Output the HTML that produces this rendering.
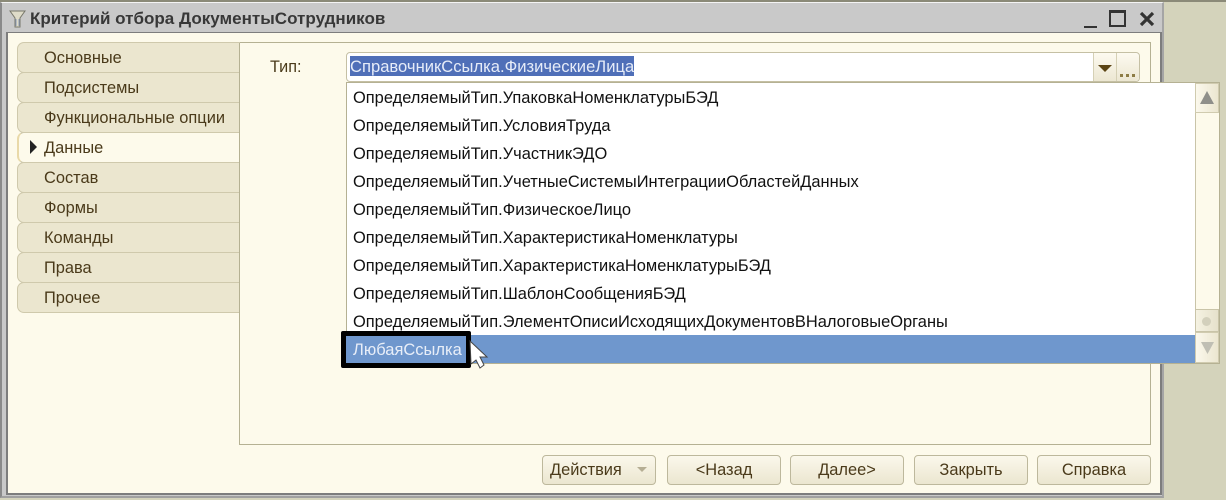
<!DOCTYPE html>
<html><head><meta charset="utf-8">
<style>
html,body{margin:0;padding:0}
body{width:1226px;height:500px;position:relative;overflow:hidden;background:#d4d3bb;font-family:"Liberation Sans",sans-serif;font-size:16px}
div{position:absolute;box-sizing:border-box}
.tab{left:17px;width:223px;height:31px;background:#ebe6cf;border:1px solid #cfc9ac;border-right:none;border-radius:7px 0 0 7px;color:#4a3a1a;line-height:30px;padding-left:26px;font-size:16.4px;white-space:nowrap}
.it{left:6px;height:28px;line-height:29px;color:#111;white-space:nowrap;font-size:16.44px}
.btn{top:455px;height:30px;background:linear-gradient(#fbf8ec,#ebe6d0);border:1px solid #bdb89c;border-radius:4px;color:#4a3a1a;text-align:center;line-height:29px;font-size:16.4px;white-space:nowrap}
</style></head><body>
<div style="left:0;top:0;width:1226px;height:2px;background:#8b8a78"></div>
<div style="left:0;top:2px;width:1164px;height:496px;background:#c9c9c9;border-left:2px solid #8a8a8a;border-top:1px solid #f4f4f4;border-right:2px solid #a5a5a5;border-bottom:2px solid #a0a0a0"></div>
<div style="left:6px;top:32px;width:1156px;height:463px;background:#fdfaeb;border:1px solid #7d7d7d;border-width:1px 2px 2px 2px"></div>
<svg style="position:absolute;left:9px;top:10px" width="17" height="18" viewBox="0 0 17 18"><path d="M1 1H16L11 8V17H6V8Z" fill="#dedbc8" stroke="#77776a"/><path d="M7 9V16M10 9V16" stroke="#8a9ab8"/></svg>
<div style="left:30px;top:9px;font-weight:bold;font-size:17.05px;line-height:20px;color:#383838;white-space:nowrap">Критерий отбора ДокументыСотрудников</div>
<div style="left:1084px;top:26px;width:13px;height:2px;background:#333"></div>
<div style="left:1109px;top:10px;width:17px;height:17px;border:2px solid #333;border-top-width:3px"></div>
<svg style="position:absolute;left:1139px;top:11px" width="16" height="16" viewBox="0 0 16 16"><path d="M2 2L14 14M14 2L2 14" stroke="#333" stroke-width="3.2"/></svg>

<div style="left:239px;top:42px;width:912px;height:403px;background:#fdfaeb;border:1px solid #b5b193"></div>
<div class="tab" style="top:42px">Основные</div>
<div class="tab" style="top:72px">Подсистемы</div>
<div class="tab" style="top:102px">Функциональные опции</div>
<div class="tab" style="top:132px;background:#fdfaeb;border-right:none;border-left:2px solid #e9d9a8;width:223px;padding-left:25px">Данные</div>
<div class="tab" style="top:162px">Состав</div>
<div class="tab" style="top:192px">Формы</div>
<div class="tab" style="top:222px">Команды</div>
<div class="tab" style="top:252px">Права</div>
<div class="tab" style="top:282px">Прочее</div>
<svg style="position:absolute;left:29px;top:140px" width="9" height="14"><path d="M1 0L8 7L1 14Z" fill="#222"/></svg>
<div style="left:239px;top:43px;width:1px;height:402px;background:#b5b193"></div>

<div style="left:270px;top:58px;font-size:16.2px;line-height:18px;color:#4a3a1a">Тип:</div>
<div style="left:346px;top:52px;width:794px;height:30px;background:#fff;border:1px solid #c5c0a4;border-radius:4px"></div>
<div style="left:350px;top:56px;width:284px;height:20px;background:#4f6fb8;color:#e6ecf8;font-size:16.6px;line-height:21px;white-space:nowrap;overflow:hidden">СправочникСсылка.ФизическиеЛица</div>
<div style="left:1093px;top:53px;width:46px;height:28px;background:linear-gradient(#fdfaf0,#ece7d2);border-left:1px solid #d5d0b5;border-radius:0 4px 4px 0"></div>
<div style="left:1116px;top:53px;width:1px;height:28px;background:#d5d0b5"></div>
<svg style="position:absolute;left:1098px;top:65px" width="14" height="7"><path d="M0 0H14L7 7Z" fill="#5a4413"/></svg>
<div style="left:1120px;top:74px;width:15px;height:3px;background:repeating-linear-gradient(90deg,#8d7c45 0,#8d7c45 3px,transparent 3px,transparent 6px)"></div>

<div style="left:346px;top:82px;width:874px;height:282px;background:#fff;border:1px solid #b5b193;overflow:hidden">
<div class="it" style="top:1px">ОпределяемыйТип.УпаковкаНоменклатурыБЭД</div>
<div class="it" style="top:29px">ОпределяемыйТип.УсловияТруда</div>
<div class="it" style="top:57px">ОпределяемыйТип.УчастникЭДО</div>
<div class="it" style="top:85px">ОпределяемыйТип.УчетныеСистемыИнтеграцииОбластейДанных</div>
<div class="it" style="top:113px">ОпределяемыйТип.ФизическоеЛицо</div>
<div class="it" style="top:141px">ОпределяемыйТип.ХарактеристикаНоменклатуры</div>
<div class="it" style="top:169px">ОпределяемыйТип.ХарактеристикаНоменклатурыБЭД</div>
<div class="it" style="top:197px">ОпределяемыйТип.ШаблонСообщенияБЭД</div>
<div class="it" style="top:225px">ОпределяемыйТип.ЭлементОписиИсходящихДокументовВНалоговыеОрганы</div>
<div style="left:0;top:252px;width:850px;height:28px;background:#6f97cd"></div>
</div>
<div style="left:1195px;top:83px;width:24px;height:280px;background:#fdfaeb;border-left:1px solid #c9c4a8"></div>
<div style="left:1195px;top:83px;width:24px;height:30px;background:linear-gradient(90deg,#fbf8ec,#ebe6d0);border:1px solid #d0cbaf"></div>
<svg style="position:absolute;left:1200px;top:91px" width="14" height="13"><path d="M7 0L14 13H0Z" fill="#8f8f8a"/></svg>
<div style="left:1195px;top:309px;width:24px;height:23px;background:linear-gradient(90deg,#f5f2e2,#e6e1cb);border:1px solid #c9c4a8"></div>
<div style="left:1202px;top:317px;width:9px;height:9px;border-radius:5px;background:#d3d0bc"></div>
<div style="left:1195px;top:332px;width:24px;height:31px;background:linear-gradient(90deg,#fbf8ec,#ebe6d0);border:1px solid #d0cbaf"></div>
<svg style="position:absolute;left:1201px;top:342px" width="13" height="12"><path d="M0 0H13L6.500 12Z" fill="#c0bfb4"/></svg>

<div style="left:341px;top:331px;width:130px;height:37px;background:#6f97cd;border:5px solid #000;border-radius:2px;color:#e8eef8;font-size:16.5px;line-height:28px;padding-left:7px;white-space:nowrap;overflow:hidden">ЛюбаяСсылка</div>
<svg style="position:absolute;left:469px;top:340px" width="20" height="30" viewBox="0 0 20 30"><path d="M1 1L18 17H11L15 25L11 28L7 20L2 24Z" fill="#fff" stroke="#444" stroke-width="1"/></svg>

<div class="btn" style="left:542px;width:114px;text-align:left;padding-left:7px">Действия</div>
<svg style="position:absolute;left:637px;top:467px" width="10" height="5"><path d="M0 0H10L5 5Z" fill="#b5ae94"/></svg>
<div class="btn" style="left:667px;width:114px">&lt;Назад</div>
<div class="btn" style="left:790px;width:114px">Далее&gt;</div>
<div class="btn" style="left:914px;width:114px">Закрыть</div>
<div class="btn" style="left:1037px;width:114px">Справка</div>
</body></html>
